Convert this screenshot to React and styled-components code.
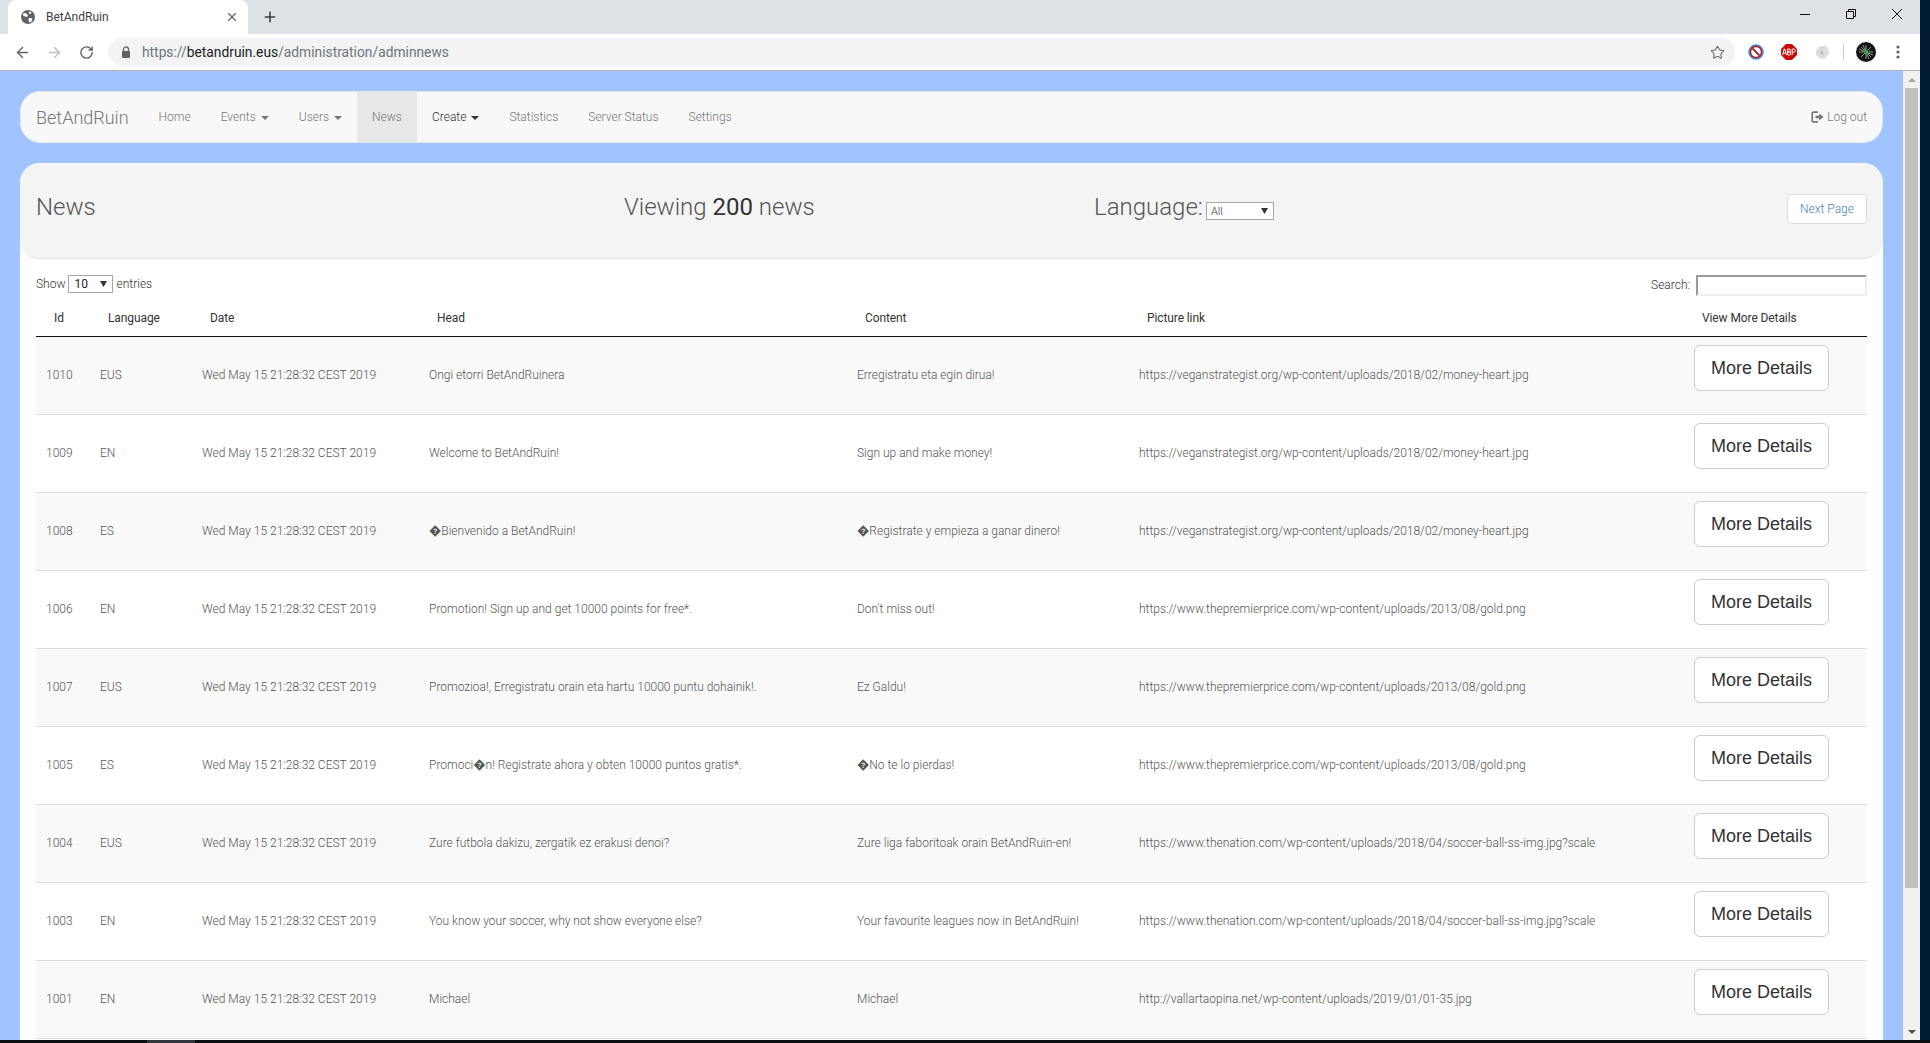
import React from 'react';
import styled, { createGlobalStyle } from 'styled-components';
import { ArrowLeft, ArrowRight, RotateCw, Star, X, Plus } from 'lucide-react';

const GlobalStyle = createGlobalStyle`
  html, body {
    margin: 0;
    padding: 0;
    height: 100%;
    overflow: hidden;
    background: #001a33;
  }
  * { box-sizing: border-box; }
`;

const selectArrow = `url("data:image/svg+xml,%3Csvg xmlns='http://www.w3.org/2000/svg' width='7' height='6'%3E%3Cpath d='M0 0h7L3.5 6z' fill='%23333'/%3E%3C/svg%3E")`;

const Desktop = styled.div`
  width: 1930px;
  height: 1043px;
  background: #001a33;
`;

const Window = styled.div`
  width: 1920px;
  height: 1040px;
  display: flex;
  flex-direction: column;
  overflow: hidden;
`;

const Taskbar = styled.div`
  height: 3px;
  padding-left: 147px;
  background: #0b0e13;
`;

const TaskItem = styled.div`
  width: 48px;
  height: 3px;
  background: #33363c;
`;

const TabStrip = styled.div`
  height: 34px;
  flex: none;
  padding-left: 8px;
  display: flex;
  align-items: stretch;
  background: #dee1e6;
  color: #3c4043;
`;

const Tab = styled.div`
  width: 240px;
  display: flex;
  align-items: center;
  padding: 0 9px 0 13px;
  background: #fff;
  border-radius: 8px 8px 0 0;
  font: 12px Roboto, "Liberation Sans", sans-serif;
`;

const TabTitle = styled.span`
  flex: 1;
  margin-left: 11px;
`;

const NewTab = styled.div`
  width: 44px;
  display: flex;
  align-items: center;
  justify-content: center;
`;

const WindowControls = styled.div`
  margin-left: auto;
  display: flex;
`;

const WindowControl = styled.div`
  width: 46px;
  height: 28px;
  display: flex;
  align-items: center;
  justify-content: center;
`;

const Toolbar = styled.div`
  height: 37px;
  flex: none;
  padding: 4px 0 4px 6px;
  display: flex;
  align-items: center;
  background: #fff;
  border-bottom: 1px solid #b3b3b3;
  color: #5f6368;
`;

const ToolButton = styled.div`
  width: 32px;
  display: flex;
  justify-content: center;
  color: ${p => (p.$dim ? '#b9bbbe' : '#5f6368')};
`;

const Omnibox = styled.div`
  width: 1627px;
  height: 28px;
  margin-left: 6px;
  padding: 0 10px 0 13px;
  display: flex;
  align-items: center;
  background: #f1f3f4;
  border-radius: 14px;
  font: 13.8px Roboto, "Liberation Sans", sans-serif;
  color: #70757a;
`;

const Url = styled.span`
  flex: 1;
  margin-left: 11px;
  b { font-weight: 400; color: #202124; }
`;

const Extensions = styled.div`
  flex: 1;
  display: flex;
  align-items: center;
  padding-left: 4px;
`;

const ExtSlot = styled.div`
  width: 33px;
  display: flex;
  justify-content: center;
`;

const ExtDivider = styled.div`
  width: 1px;
  height: 16px;
  margin: 0 12px 0 5px;
  background: #c8c8c8;
`;

const KebabSlot = styled(ExtSlot)`
  margin-left: 5px;
`;

const Viewport = styled.div`
  flex: 1;
  min-height: 0;
  display: flex;
`;

const Page = styled.div`
  flex: 1;
  min-width: 0;
  overflow: hidden;
  padding: 20px 20px 0;
  background: #a0c4ff;
  font: 300 12px Roboto, sans-serif;
  color: #555;
`;

const Scrollbar = styled.div`
  width: 17px;
  flex: none;
  display: flex;
  flex-direction: column;
  align-items: center;
  background: #f1f1f1;
`;

const ScrollArrow = styled.div`
  height: 17px;
  flex: none;
  display: flex;
  align-items: center;
  justify-content: center;
  &::before {
    content: '';
    border-left: 4px solid transparent;
    border-right: 4px solid transparent;
    ${p => (p.$down ? 'border-top: 4px solid #505050;' : 'border-bottom: 4px solid #a3a3a3;')}
  }
`;

const ScrollThumb = styled.div`
  width: 13px;
  height: 800px;
  flex: none;
  background: #c1c1c1;
`;

const ScrollRest = styled.div`
  flex: 1;
`;

const Navbar = styled.nav`
  height: 52px;
  display: flex;
  align-items: stretch;
  padding: 0 15px;
  background: #f8f8f8;
  border: 1px solid #e7e7e7;
  border-radius: 20px;
  margin-bottom: 20px;
`;

const Brand = styled.a`
  display: flex;
  align-items: center;
  margin-right: 15px;
  font-size: 18px;
  color: #777;
`;

const NavLink = styled.a`
  display: flex;
  align-items: center;
  padding: 0 15px;
  font-size: 12px;
  color: ${p => (p.$open ? '#333' : '#777')};
  background: ${p => (p.$active ? '#e7e7e7' : 'transparent')};
`;

const Caret = styled.span`
  width: 0;
  height: 0;
  margin-left: 5px;
  margin-top: 1px;
  border-top: 4px solid currentColor;
  border-left: 4px solid transparent;
  border-right: 4px solid transparent;
`;

const LogoutLink = styled.a`
  margin-left: auto;
  display: flex;
  align-items: center;
  gap: 3px;
  font-size: 12px;
  color: #777;
`;

const Panel = styled.main`
  background: #fff;
  border-radius: 20px 20px 0 0;
  height: 900px;
`;

const Jumbotron = styled.header`
  height: 96px;
  display: flex;
  padding: 0 16px;
  background: #f4f4f4;
  border-bottom: 1px solid #e4e4e4;
  border-radius: 20px;
`;

const Heading = styled.h1`
  margin: 0;
  padding-top: 30px;
  font-size: 24px;
  font-weight: 300;
  line-height: 28px;
  color: #555;
  b { font-weight: 400; color: #333; }
`;

const TitleCol = styled(Heading)`
  width: 588px;
`;

const CountCol = styled(Heading)`
  width: 471px;
`;

const LangCol = styled(Heading)`
  flex: 1;
  display: flex;
  align-items: flex-start;
  margin-left: -1px;
`;

const NativeSelect = styled.select`
  height: 18px;
  appearance: none;
  background: #fff ${selectArrow} no-repeat;
  border: 1px solid #a6a6a6;
  border-radius: 0;
  color: #333;
`;

const LangSelect = styled(NativeSelect)`
  width: 68px;
  margin: 9px 0 0 3px;
  padding: 0 0 0 4px;
  background-position: 54px 5px;
  font: 300 11px Roboto, sans-serif;
`;

const NextPage = styled.a`
  width: 80px;
  height: 30px;
  margin-top: 31px;
  display: flex;
  align-items: center;
  justify-content: center;
  background: #fff;
  border: 1px solid #ddd;
  border-radius: 4px;
  font-size: 12px;
  color: #4a7fb0;
`;

const TableWrap = styled.section`
  padding: 16px 16px 0;
`;

const TableControls = styled.div`
  height: 21px;
  display: flex;
  align-items: center;
  justify-content: space-between;
  font-size: 12px;
  color: #333;
`;

const ShowLabel = styled.label`
  display: flex;
  align-items: center;
  margin-top: -3px;
  gap: 3px;
`;

const ShowSelect = styled(NativeSelect)`
  width: 45px;
  padding: 0 0 0 5px;
  background-position: 31px 5px;
  font: 400 12px Roboto, sans-serif;
  color: #222;
`;

const SearchLabel = styled.label`
  display: flex;
  align-items: center;
  gap: 6px;
`;

const SearchText = styled.span`
  margin-top: -1px;
`;

const SearchInput = styled.input`
  width: 171px;
  height: 21px;
  padding: 0;
  background: #fff;
  border: 2px inset #eee;
`;

const Table = styled.table`
  width: 100%;
  table-layout: fixed;
  border-collapse: separate;
  border-spacing: 0;
  font-size: 12px;
`;

const HeadRow = styled.tr`
  height: 41px;
`;

const Th = styled.th`
  padding: 4px 0 0 18px;
  text-align: left;
  font-weight: 400;
  letter-spacing: -0.1px;
  color: #333;
  white-space: nowrap;
  border-bottom: 1px solid #111;
`;

const Row = styled.tr`
  height: 78px;
  background: ${p => (p.$odd ? '#f9f9f9' : '#fff')};
`;

const Td = styled.td`
  padding: 0 0 2px 10px;
  white-space: nowrap;
  overflow: hidden;
  border-bottom: 1px solid #ddd;
`;

const ActionTd = styled(Td)`
  vertical-align: top;
  padding-top: 8px;
`;

const MoreButton = styled.a`
  width: 135px;
  height: 46px;
  display: flex;
  align-items: center;
  justify-content: center;
  background: #fff;
  border: 1px solid #ccc;
  border-radius: 6px;
  font: 18px "Liberation Sans", sans-serif;
  color: #333;
`;

const columns = [54, 102, 227, 428, 282, 555, 183];
const headers = ['Id', 'Language', 'Date', 'Head', 'Content', 'Picture link', 'View More Details'];

const heartUrl = 'https://veganstrategist.org/wp-content/uploads/2018/02/money-heart.jpg';
const goldUrl = 'https://www.thepremierprice.com/wp-content/uploads/2013/08/gold.png';
const ballUrl = 'https://www.thenation.com/wp-content/uploads/2018/04/soccer-ball-ss-img.jpg?scale';

const news = [
  ['1010', 'EUS', 'Ongi etorri BetAndRuinera', 'Erregistratu eta egin dirua!', heartUrl],
  ['1009', 'EN', 'Welcome to BetAndRuin!', 'Sign up and make money!', heartUrl],
  ['1008', 'ES', '\uFFFDBienvenido a BetAndRuin!', '\uFFFDRegistrate y empieza a ganar dinero!', heartUrl],
  ['1006', 'EN', 'Promotion! Sign up and get 10000 points for free*.', "Don't miss out!", goldUrl],
  ['1007', 'EUS', 'Promozioa!, Erregistratu orain eta hartu 10000 puntu dohainik!.', 'Ez Galdu!', goldUrl],
  ['1005', 'ES', 'Promoci\uFFFDn! Registrate ahora y obten 10000 puntos gratis*.', '\uFFFDNo te lo pierdas!', goldUrl],
  ['1004', 'EUS', 'Zure futbola dakizu, zergatik ez erakusi denoi?', 'Zure liga faboritoak orain BetAndRuin-en!', ballUrl],
  ['1003', 'EN', 'You know your soccer, why not show everyone else?', 'Your favourite leagues now in BetAndRuin!', ballUrl],
  ['1001', 'EN', 'Michael', 'Michael', 'http://vallartaopina.net/wp-content/uploads/2019/01/01-35.jpg'],
];

const date = 'Wed May 15 21:28:32 CEST 2019';

const GlobeIcon = () => (
  <svg width="14" height="14" viewBox="0 0 16 16">
    <circle cx="8" cy="8" r="8" fill="#5f6368" />
    <path d="M3 3.5l3 .5 2 2-1 2-3-1-2-1zM9 1.5l3 1-1 2-2-.5zM9 9l4 .5-1 4-2 1-1.5-3z" fill="#fff" />
  </svg>
);

const LockIcon = () => (
  <svg width="10" height="12" viewBox="0 0 10 12">
    <path d="M2.5 5V3.4a2.5 2.5 0 015 0V5" fill="none" stroke="#5f6368" strokeWidth="1.3" />
    <rect x="1" y="5" width="8" height="7" rx="1" fill="#5f6368" />
  </svg>
);

const BlockedIcon = () => (
  <svg width="16" height="16" viewBox="0 0 16 16">
    <circle cx="8" cy="8" r="7.8" fill="#4a9be8" />
    <circle cx="8" cy="8" r="5.6" fill="#fff" stroke="#a5232e" strokeWidth="1.6" />
    <path d="M4.5 4.5l7 7" stroke="#a5232e" strokeWidth="1.8" />
  </svg>
);

const AbpIcon = () => (
  <svg width="16" height="16" viewBox="0 0 16 16">
    <path d="M5 0h6l5 5v6l-5 5H5l-5-5V5z" fill="#c70d0d" />
    <path d="M1.5 11l1.7-6h.6l1.7 6M2.3 9h2.4M6.7 5v6M6.7 5h1.4a1.4 1.4 0 010 3H6.7M6.7 8h1.6a1.5 1.5 0 010 3H6.7M11.2 11V5h1.5a1.6 1.6 0 010 3.2h-1.5" stroke="#fff" strokeWidth="1" fill="none" />
  </svg>
);

const GhostIcon = () => (
  <svg width="14" height="14" viewBox="0 0 15 14">
    <path d="M1 6l4-5 6-1 3 3 1 6-4 5H5L1 10z" fill="#dcdcdc" />
    <path d="M5 8l3-3 1 5z" fill="#b8b8b8" />
  </svg>
);

const AvatarIcon = () => (
  <svg width="20" height="20" viewBox="0 0 20 20">
    <circle cx="10" cy="10" r="10" fill="#151515" />
    <path d="M10 3v14M3 10h14M5 5l10 10M15 5L5 15M7 3l6 14M3 7l14 6" stroke="#a9b4a9" strokeWidth=".8" />
    <circle cx="10" cy="10" r="2.4" fill="#3f9a45" />
  </svg>
);

const KebabIcon = () => (
  <svg width="4" height="14" viewBox="0 0 4 14">
    <circle cx="2" cy="2" r="1.6" fill="#5f6368" />
    <circle cx="2" cy="7" r="1.6" fill="#5f6368" />
    <circle cx="2" cy="12" r="1.6" fill="#5f6368" />
  </svg>
);

const MinimizeIcon = () => (
  <svg width="10" height="10" viewBox="0 0 10 10">
    <path d="M0 5.5h10" stroke="#111" />
  </svg>
);

const RestoreIcon = () => (
  <svg width="10" height="10" viewBox="0 0 10 10" fill="none" stroke="#111">
    <path d="M.5 2.5h7v7h-7zM2.5 2.5v-2h7v7h-2" />
  </svg>
);

const CloseIcon = () => (
  <svg width="10" height="10" viewBox="0 0 10 10" fill="none" stroke="#111">
    <path d="M0 0l10 10M10 0L0 10" />
  </svg>
);

const LogOutIcon = () => (
  <svg width="13" height="12" viewBox="0 0 13 12">
    <path d="M7 1.2H2.2a1 1 0 00-1 1v7.6a1 1 0 001 1H7" fill="none" stroke="#777" strokeWidth="1.7" />
    <path d="M4.5 4.7h3.7V2.4L12.6 6 8.2 9.6V7.3H4.5z" fill="#777" />
  </svg>
);

const App = () => {
  return (
    <Desktop>
      <GlobalStyle />
      <Window>
        <TabStrip>
          <Tab>
            <GlobeIcon />
            <TabTitle>BetAndRuin</TabTitle>
            <X size={14} strokeWidth={2} color="#5f6368" />
          </Tab>
          <NewTab><Plus size={16} strokeWidth={2.4} /></NewTab>
          <WindowControls>
            <WindowControl><MinimizeIcon /></WindowControl>
            <WindowControl><RestoreIcon /></WindowControl>
            <WindowControl><CloseIcon /></WindowControl>
          </WindowControls>
        </TabStrip>
        <Toolbar>
          <ToolButton><ArrowLeft size={17} strokeWidth={2} /></ToolButton>
          <ToolButton $dim><ArrowRight size={17} strokeWidth={2} /></ToolButton>
          <ToolButton><RotateCw size={15} strokeWidth={2.2} /></ToolButton>
          <Omnibox>
            <LockIcon />
            <Url>https://<b>betandruin.eus</b>/administration/adminnews</Url>
            <Star size={15} strokeWidth={1.8} />
          </Omnibox>
          <Extensions>
            <ExtSlot><BlockedIcon /></ExtSlot>
            <ExtSlot><AbpIcon /></ExtSlot>
            <ExtSlot><GhostIcon /></ExtSlot>
            <ExtDivider />
            <AvatarIcon />
            <KebabSlot><KebabIcon /></KebabSlot>
          </Extensions>
        </Toolbar>
        <Viewport>
          <Page>
            <Navbar>
              <Brand>BetAndRuin</Brand>
              <NavLink>Home</NavLink>
              <NavLink>Events <Caret /></NavLink>
              <NavLink>Users <Caret /></NavLink>
              <NavLink $active>News</NavLink>
              <NavLink $open>Create <Caret /></NavLink>
              <NavLink>Statistics</NavLink>
              <NavLink>Server Status</NavLink>
              <NavLink>Settings</NavLink>
              <LogoutLink><LogOutIcon />Log out</LogoutLink>
            </Navbar>
            <Panel>
              <Jumbotron>
                <TitleCol>News</TitleCol>
                <CountCol>Viewing <b>200</b> news</CountCol>
                <LangCol>
                  Language:
                  <LangSelect defaultValue="All"><option>All</option></LangSelect>
                </LangCol>
                <NextPage>Next Page</NextPage>
              </Jumbotron>
              <TableWrap>
                <TableControls>
                  <ShowLabel>
                    Show
                    <ShowSelect defaultValue="10"><option>10</option></ShowSelect>
                    entries
                  </ShowLabel>
                  <SearchLabel>
                    <SearchText>Search:</SearchText>
                    <SearchInput />
                  </SearchLabel>
                </TableControls>
                <Table>
                  <colgroup>
                    {columns.map((width, index) => <col key={index} width={width} />)}
                  </colgroup>
                  <thead>
                    <HeadRow>
                      {headers.map(header => <Th key={header}>{header}</Th>)}
                    </HeadRow>
                  </thead>
                  <tbody>
                    {news.map((item, index) => (
                      <Row key={item[0]} $odd={index % 2 === 0}>
                        <Td>{item[0]}</Td>
                        <Td>{item[1]}</Td>
                        <Td>{date}</Td>
                        <Td>{item[2]}</Td>
                        <Td>{item[3]}</Td>
                        <Td>{item[4]}</Td>
                        <ActionTd><MoreButton>More Details</MoreButton></ActionTd>
                      </Row>
                    ))}
                  </tbody>
                </Table>
              </TableWrap>
            </Panel>
          </Page>
          <Scrollbar>
            <ScrollArrow />
            <ScrollThumb />
            <ScrollRest />
            <ScrollArrow $down />
          </Scrollbar>
        </Viewport>
      </Window>
      <Taskbar><TaskItem /></Taskbar>
    </Desktop>
  );
};

export default App;
